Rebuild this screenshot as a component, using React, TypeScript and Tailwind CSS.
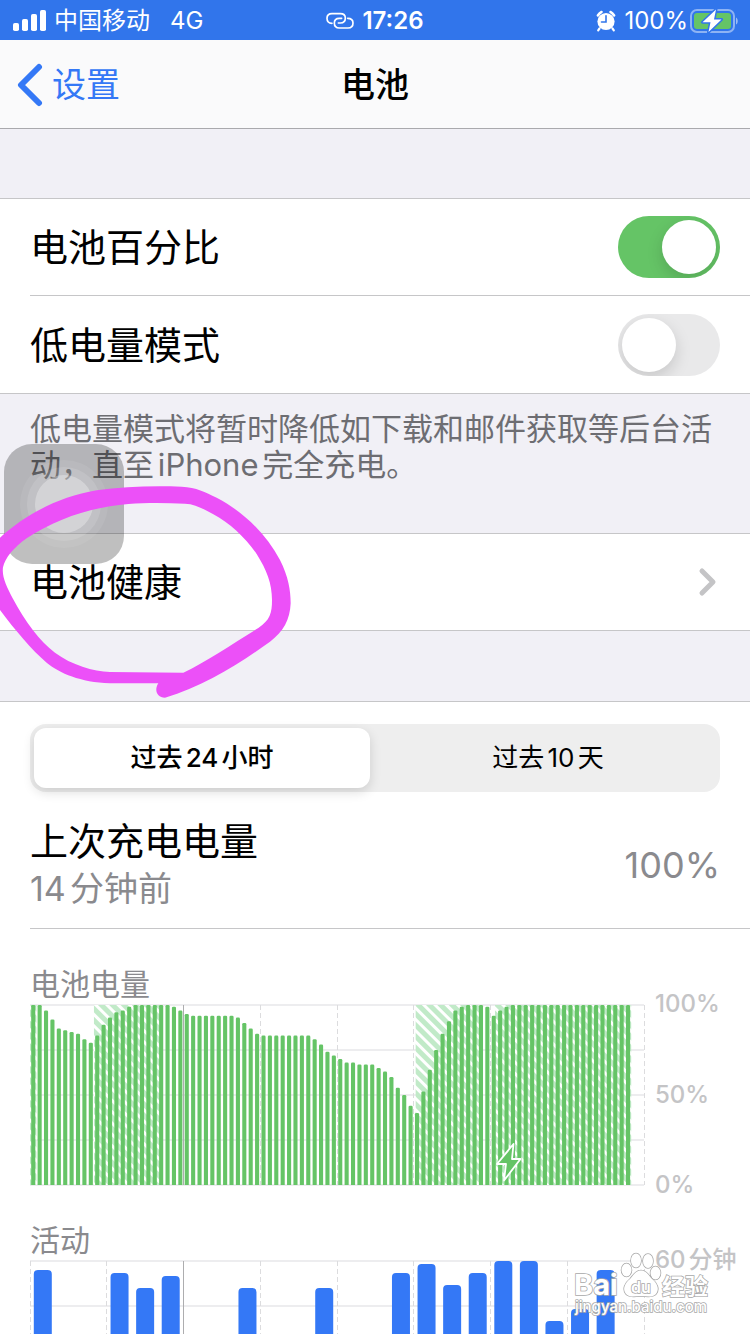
import clsx from "clsx";
import React from "react";

// battery level in percent, one value per quarter of an hour
const batteryLevels = [
  100, 100, 97, 92, 87, 86, 85, 84, 81, 79, 83, 89, 93, 96, 97, 99, 100, 100,
  100, 100, 100, 100, 99, 97, 95, 94, 94, 94, 94, 94, 94, 94, 93, 90, 87, 84,
  83, 83, 83, 83, 83, 83, 83, 83, 81, 78, 74, 72, 70, 68, 68, 67, 67, 67, 65,
  63, 60, 54, 50, 44, 40, 52, 64, 75, 84, 91, 97, 99, 100, 100, 100, 99, 94, 97,
  99, 100, 100, 100, 100, 100, 100, 100, 100, 100, 100, 100, 100, 100, 100, 100,
  100, 100, 100, 100,
];

// periods on the charger, as [first, last] slot
const chargingPeriods = [
  [0, 1],
  [10, 20.5],
  [60.3, 70.5],
  [72.7, 94],
];

// minutes of screen activity per hour
const activityMinutes = [
  57, 0, 0, 56, 51, 55, 0, 0, 51, 0, 0, 51, 0, 0, 56, 59, 52, 56, 60, 60, 40,
  44, 57, 0,
];

const CHART_WIDTH = 614;
const CHART_HEIGHT = 180;
const SLOT = CHART_WIDTH / 96;
const HOUR = CHART_WIDTH / 24;

function StatusBar() {
  return (
    <header className="grid h-10 grid-cols-[1fr_auto_1fr] items-center bg-[#3175eb] px-3 pt-px text-2xl text-white">
      <div className="flex items-center">
        <svg width="34" height="22" viewBox="0 0 34 22" fill="currentColor">
          <rect x="1" y="13" width="6" height="8" rx="1.8" />
          <rect x="10" y="9" width="6" height="12" rx="1.8" />
          <rect x="19" y="4" width="6" height="17" rx="1.8" />
          <rect x="28" y="0" width="6" height="21" rx="1.8" />
        </svg>
        <span className="ml-2">中国移动</span>
        <span className="ml-5">4G</span>
      </div>
      <div className="flex items-center gap-2">
        <svg
          width="28"
          height="18"
          viewBox="74 35 84 52"
          fill="none"
          stroke="currentColor"
          strokeWidth="5"
          strokeLinecap="round"
        >
          <path d="M92 68C82 68 77 62 77 53C77 44 83 39 92 39H117C126 39 132 44 132 52C132 61 126 67 117 67H111" />
          <path d="M139 53C149 53 155 59 155 67C155 76 149 82 140 82H114C105 82 99 76 99 67C99 58 105 53 114 53H121" />
        </svg>
        <span className="font-semibold">17:26</span>
      </div>
      <div className="flex items-center justify-end">
        <svg width="20" height="22" viewBox="0 0 20 22" fill="none">
          <circle cx="10" cy="11.500" r="8.600" fill="#fff" />
          <path
            d="M1.800 5.500A11 11 0 0 1 5.600 1.900M18.200 5.500A11 11 0 0 0 14.400 1.900"
            stroke="#fff"
            strokeWidth="2.400"
            strokeLinecap="round"
          />
          <path
            d="M3.500 18.500L2.200 20.300M16.500 18.500L17.800 20.300"
            stroke="#fff"
            strokeWidth="2.200"
            strokeLinecap="round"
          />
          <path
            d="M10 5.800V12H5.500"
            stroke="#3175eb"
            strokeWidth="1.600"
            strokeLinecap="round"
          />
        </svg>
        <span className="mr-0.5 ml-2">100%</span>
        <svg width="48" height="24" viewBox="0 0 48 24">
          <rect
            x="1"
            y="1"
            width="43"
            height="22"
            rx="6"
            fill="none"
            stroke="#fff"
            strokeOpacity="0.45"
            strokeWidth="2"
          />
          <path d="M46 8.500C48.300 9.500 48.300 14.500 46 15.500Z" fill="#9bbcf5" />
          <rect x="4" y="4" width="37" height="16" rx="3" fill="#65c466" />
          <path
            d="M26 0.500L12.500 13.300H20.500L18.500 23L31.500 10.400H24Z"
            fill="#fff"
            stroke="#3175eb"
            strokeWidth="3"
            strokeLinejoin="round"
            paintOrder="stroke"
          />
        </svg>
      </div>
    </header>
  );
}

function NavBar() {
  return (
    <nav className="grid h-[89px] grid-cols-[1fr_auto_1fr] items-center border-b border-[#a9a9ad] bg-[#fafafb] px-4 pt-0.5">
      <a
        href="#settings"
        className="flex items-center gap-2 text-[34px] leading-10 text-[#3478f6]"
      >
        <svg width="28" height="44" viewBox="0 0 28 44" fill="none">
          <path
            d="M23 4L5 22L23 40"
            stroke="currentColor"
            strokeWidth="6"
            strokeLinecap="round"
            strokeLinejoin="round"
          />
        </svg>
        设置
      </a>
      <h1 className="text-[34px] leading-10 font-medium">电池</h1>
    </nav>
  );
}

interface ToggleRowProps {
  id: string;
  label: string;
  defaultChecked?: boolean;
}

function ToggleRow({ id, label, defaultChecked }: ToggleRowProps) {
  return (
    <div className="flex h-[97px] items-center justify-between border-[#c6c6c8] pr-[30px] not-last:border-b">
      <label htmlFor={id} className="text-[38px] leading-[48px]">
        {label}
      </label>
      <input
        id={id}
        type="checkbox"
        role="switch"
        defaultChecked={defaultChecked}
        className="h-[62px] w-[102px] appearance-none overflow-hidden rounded-full bg-[#e9e9ea] p-1 before:block before:size-[54px] before:rounded-full before:bg-white before:shadow-[0_6px_16px_rgba(0,0,0,0.15)] checked:bg-[#65c466] checked:before:translate-x-10"
      />
    </div>
  );
}

interface ChartProps {
  title: string;
  labels: string[];
  children: React.ReactNode;
}

function Chart({ title, labels, children }: ChartProps) {
  return (
    <section className="pt-[35px]">
      <h2 className="text-[30px] leading-10 text-[#8a8a8e]">{title}</h2>
      <div className="flex">
        <svg
          viewBox="0 0 615 181"
          className="min-w-0 flex-1 overflow-visible"
          role="img"
          aria-label={title}
        >
          <g transform="translate(0 1)">
            {[0, 1, 2, 3, 4].map((i) => (
              <line
                key={i}
                x2={CHART_WIDTH}
                y1={i * 45}
                y2={i * 45}
                stroke="#ededef"
                strokeWidth="2"
              />
            ))}
            {[0, 1, 2, 3, 4, 5, 6, 7, 8].map((i) => (
              <line
                key={i}
                x1={Math.floor(i * HOUR * 3) + 0.5}
                x2={Math.floor(i * HOUR * 3) + 0.5}
                y2={CHART_HEIGHT}
                stroke={i === 2 ? "#adadaf" : "#dcdcde"}
                strokeDasharray={i === 2 ? undefined : "5 3"}
              />
            ))}
            {children}
          </g>
        </svg>
        <ul className="-my-4 flex w-[105px] flex-col justify-between pl-[10px] text-2xl/8 font-medium text-[#c4c4c6]">
          {labels.map((label) => (
            <li key={label}>{label}</li>
          ))}
        </ul>
      </div>
    </section>
  );
}

function BatteryChart() {
  return (
    <Chart title="电池电量" labels={["100%", "50%", "0%"]}>
      <defs>
        <pattern
          id="charging"
          width="8"
          height="8"
          patternUnits="userSpaceOnUse"
          patternTransform="rotate(-45)"
        >
          <rect width="8" height="8" fill="#fff" />
          <rect width="5" height="8" fill="#c1eac8" />
        </pattern>
      </defs>
      {chargingPeriods.map(([from, to]) => (
        <rect
          key={from}
          x={from * SLOT}
          width={(to - from) * SLOT}
          height={CHART_HEIGHT}
          fill="url(#charging)"
        />
      ))}
      {batteryLevels.map((level, i) => (
        <path
          key={i}
          d={`M${i * SLOT + 1.2} 180V${181.3 - level * 1.8}q0 -1.300 1.300 -1.300h1.500q1.300 0 1.300 1.300V180Z`}
          fill="#65c466"
        />
      ))}
      <path
        d="M483.500 139L467 159H476L474 175.500L490.500 154H482Z"
        fill="#65c466"
        stroke="#fff"
        strokeWidth="1.800"
        strokeLinejoin="round"
      />
    </Chart>
  );
}

function ActivityChart() {
  return (
    <Chart title="活动" labels={["60分钟"]}>
      {activityMinutes.map((minutes, i) =>
        minutes > 0 ? (
          <path
            key={i}
            d={`M${i * HOUR + 3.8} 180V${184 - minutes * 3}q0 -4 4 -4h10q4 0 4 4V180Z`}
            fill="#3478f6"
          />
        ) : null
      )}
    </Chart>
  );
}

function AssistiveTouch() {
  return (
    <button
      type="button"
      aria-label="辅助触控"
      className="absolute top-[444px] left-1 size-[120px] rounded-[28px] bg-black/25"
    >
      <svg viewBox="0 0 120 120" fill="#fff">
        <circle cx="60" cy="60" r="44" fillOpacity="0.07" />
        <circle cx="60" cy="60" r="37" fillOpacity="0.12" />
        <circle cx="60" cy="60" r="29" fillOpacity="0.3" />
      </svg>
    </button>
  );
}

function HandDrawnCircle() {
  return (
    <svg
      viewBox="0 0 930 930"
      className="pointer-events-none absolute top-[400px] left-0 w-[310px]"
    >
      <path
        fill="#ec50f8"
        fillRule="evenodd"
        d="M495 893C470 892 462 870 475 850H330C240 846 180 820 140 788C95 750 45 690 0 630L-30 580V440L0 413C80 340 180 290 290 271C370 260 450 257 545 260C590 262 615 276 650 293C735 338 800 405 840 480C865 530 872 570 872 610C870 660 850 695 810 725C720 790 610 860 495 893ZM550 818C620 785 700 730 775 684C810 660 816 640 816 600C816 550 800 510 770 462C735 412 690 370 640 343C610 326 585 312 555 311C500 309 440 308 385 312C280 320 170 355 80 415C40 443 15 475 9 502C5 530 20 560 38 595C75 665 120 725 165 758C215 795 280 814 330 816Z"
      />
    </svg>
  );
}

function Watermark() {
  return (
    <svg
      viewBox="0 0 140 66"
      className="pointer-events-none absolute top-[1252px] right-[38px] w-[140px]"
      fill="#fff"
      stroke="#a8a8a8"
      strokeWidth="1.500"
      paintOrder="stroke"
      fontFamily="Inter, 'Noto Sans CJK SC', sans-serif"
    >
      <text x="2" y="43" fontSize="29" fontWeight="700">
        Bai
      </text>
      <ellipse cx="54.500" cy="18" rx="5" ry="6.500" />
      <ellipse cx="64" cy="8.500" rx="5" ry="7" />
      <ellipse cx="76" cy="9" rx="5" ry="7" />
      <ellipse cx="83.500" cy="21" rx="5" ry="6.500" />
      <path d="M69 18.500C75 18.500 77 24 80 27C85 31 88 37 84 42C80 46 75 44 69 44C63 44 58 46 54 42C50 37 53 31 58 27C61 24 63 18.500 69 18.500Z" />
      <text x="59" y="41" fontSize="16" fontWeight="600">
        du
      </text>
      <text x="90" y="43" fontSize="23" fontWeight="700">
        经验
      </text>
      <text x="3" y="60" fontSize="15" fontWeight="500">
        jingyan.baidu.com
      </text>
    </svg>
  );
}

const ranges = ["过去24小时", "过去10天"];

export default function App() {
  const [range, setRange] = React.useState<string>(ranges[0]);

  return (
    <div className="relative h-screen overflow-hidden bg-[#f1f0f6] font-[Inter,'Noto_Sans_CJK_SC',sans-serif] text-black [text-autospace:normal]">
      <StatusBar />
      <NavBar />

      <main>
        <section className="mt-[69px] border-y border-[#c6c6c8] bg-white pl-[30px]">
          <ToggleRow id="percentage" label="电池百分比" defaultChecked />
          <ToggleRow id="lowPower" label="低电量模式" />
        </section>
        <p className="h-[139px] px-[30px] pt-[17px] text-[31px] leading-9 text-[#6d6d72]">
          低电量模式将暂时降低如下载和邮件获取等后台活动，直至iPhone完全充电。
        </p>

        <a
          href="#health"
          className="flex h-[98px] items-center justify-between border-y border-[#c6c6c8] bg-white pr-8 pl-[30px] text-[38px] leading-[48px]"
        >
          电池健康
          <svg width="20" height="30" viewBox="0 0 20 30" fill="none">
            <path
              d="M4 4L15 15L4 26"
              stroke="#c4c4c6"
              strokeWidth="5"
              strokeLinecap="round"
              strokeLinejoin="round"
            />
          </svg>
        </a>

        <section className="mt-[70px] border-t border-[#c6c6c8] bg-white pt-[22px] pl-[30px]">
          <div className="mr-[30px] flex h-[68px] gap-[10px] rounded-2xl bg-[#eeeeee] p-1">
            {ranges.map((item) => (
              <button
                key={item}
                type="button"
                aria-pressed={item === range}
                onClick={() => setRange(item)}
                className={clsx(
                  "flex-1 rounded-xl text-[26px] leading-8",
                  item === range &&
                    "bg-white font-medium shadow-[0_4px_12px_rgba(0,0,0,0.14)]"
                )}
              >
                {item}
              </button>
            ))}
          </div>
          <div className="flex items-center justify-between border-b border-[#c6c6c8] pt-[25px] pr-[30px] pb-[15px]">
            <div>
              <p className="text-[38px] leading-[48px]">上次充电电量</p>
              <p className="text-[34px] leading-[48px] text-[#8a8a8e]">
                14分钟前
              </p>
            </div>
            <p className="text-4xl text-[#8a8a8e]">100%</p>
          </div>
          <BatteryChart />
          <ActivityChart />
        </section>
      </main>

      <AssistiveTouch />
      <HandDrawnCircle />
      <Watermark />
    </div>
  );
}
